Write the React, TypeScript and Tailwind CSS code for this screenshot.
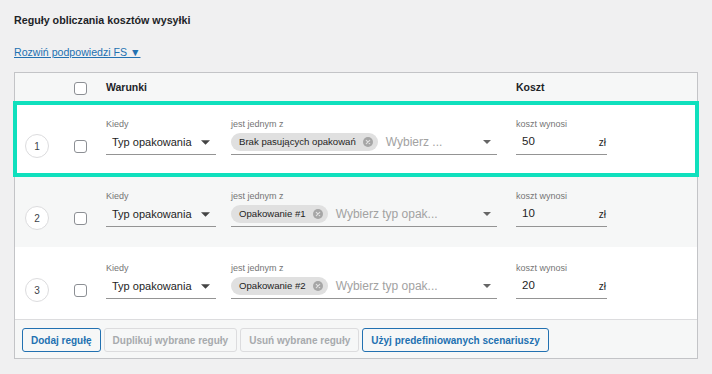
import React from 'react';

interface Rule {
  n: number;
  chip: string;
  placeholder: string;
  cost: string;
}

const rules: Rule[] = [
  { n: 1, chip: 'Brak pasujących opakowań', placeholder: 'Wybierz ...', cost: '50' },
  { n: 2, chip: 'Opakowanie #1', placeholder: 'Wybierz typ opak...', cost: '10' },
  { n: 3, chip: 'Opakowanie #2', placeholder: 'Wybierz typ opak...', cost: '20' },
];

const Caret = ({ className = '' }: { className?: string }) => (
  <svg viewBox="0 0 10 5" className={className}>
    <path d="M0 0 L5 5 L10 0 Z" fill="currentColor" />
  </svg>
);

const Checkbox = () => (
  <div className="w-[13px] h-[13px] rounded-[3px] border border-[#8c8f94] bg-white" />
);

const Chip = ({ label }: { label: string }) => (
  <div className="flex items-center h-[18px] rounded-full bg-[#e0e0e0] pl-[8px] pr-[5px] gap-[7px] shrink-0">
    <span className="text-[9.6px] text-[#1e1e1e] whitespace-nowrap">{label}</span>
    <svg viewBox="0 0 10 10" className="w-[10px] h-[10px]">
      <circle cx="5" cy="5" r="5" fill="#a6a6a6" />
      <path d="M3.3 3.3 L6.7 6.7 M6.7 3.3 L3.3 6.7" stroke="#e0e0e0" strokeWidth="1.2" strokeLinecap="round" />
    </svg>
  </div>
);

const RuleRow = ({ rule, striped, active }: { rule: Rule; striped: boolean; active: boolean }) => (
  <div
    className={`flex h-[72px] ${striped ? 'bg-[#f6f7f7]' : 'bg-white'} ${
      active ? 'relative z-10 outline-4 outline-[#0fe0bd] -outline-offset-2' : ''
    }`}
  >
    {/* Number */}
    <div className="w-[59px] pl-[10px] pt-[31px]">
      <div className="w-[24px] h-[24px] rounded-full border border-[#dcdcde] bg-white flex items-center justify-center text-[10px] text-[#3c434a]">
        {rule.n}
      </div>
    </div>

    {/* Checkbox */}
    <div className="w-[32px] pt-[37px]">
      <Checkbox />
    </div>

    {/* Conditions */}
    <div className="w-[410px] flex gap-[15px] pt-[15px]">
      <div className="w-[110px]">
        <div className="h-[12px] leading-[12px] text-[9px] text-[#757575]">Kiedy</div>
        <div className="h-[25px] border-b border-[#949494] flex items-center justify-between pl-[6px] pr-[6px]">
          <span className="text-[11px] text-[#1e1e1e]">Typ opakowania</span>
          <Caret className="w-[9px] h-[5px] text-[#444]" />
        </div>
      </div>
      <div className="w-[266px]">
        <div className="h-[12px] leading-[12px] text-[9px] text-[#757575]">jest jednym z</div>
        <div className="h-[25px] border-b border-[#949494] flex items-center pr-[6px]">
          <Chip label={rule.chip} />
          <span className="ml-[8px] text-[12px] text-[#a2a2a2] whitespace-nowrap">{rule.placeholder}</span>
          <Caret className="ml-auto w-[8px] h-[4px] text-[#666]" />
        </div>
      </div>
    </div>

    {/* Cost */}
    <div className="w-[91px] pt-[15px]">
      <div className="h-[12px] leading-[12px] text-[9px] text-[#757575]">koszt wynosi</div>
      <div className="h-[25px] border-b border-[#949494] flex items-center justify-between pl-[6px] pr-[1px]">
        <span className="text-[11.5px] text-[#1e1e1e]">{rule.cost}</span>
        <span className="text-[10px] text-[#1e1e1e]">zł</span>
      </div>
    </div>
  </div>
);

export default function App() {
  return (
    <div className="w-[712px] h-[374px] bg-[#f0f0f1] px-[14px] font-['Liberation_Sans',Arial,sans-serif] text-[#1d2327]">
      <div className="pt-[13px] leading-[14px] text-[10.7px] font-bold">Reguły obliczania kosztów wysyłki</div>

      <div className="mt-[18px] leading-[14px] text-[10.6px]">
        <a className="text-[#2271b1] underline">Rozwiń podpowiedzi FS ▼</a>
      </div>

      {/* Rules table */}
      <div className="mt-[13px] border border-[#c3c4c7] bg-white">
        {/* Header */}
        <div className="flex h-[30px] items-center bg-[#f6f7f7] text-[10.5px] font-bold">
          <div className="w-[59px]" />
          <div className="w-[32px]">
            <Checkbox />
          </div>
          <div className="w-[410px]">Warunki</div>
          <div>Koszt</div>
        </div>

        {rules.map((rule, i) => (
          <RuleRow key={rule.n} rule={rule} striped={i % 2 === 1} active={i === 0} />
        ))}

        {/* Footer */}
        <div className="flex gap-[3px] border-t border-[#dcdcde] bg-[#f6f7f7] px-[7px] pt-[8px] pb-[6px] text-[10px] font-bold">
          <button className="h-[24px] px-[8px] rounded-[3px] border border-[#2271b1] text-[#2271b1] bg-[#f6f7f7]">
            Dodaj regułę
          </button>
          <button className="h-[24px] px-[8px] rounded-[3px] border border-[#dcdcde] text-[#a7aaad] bg-[#f6f7f7]">
            Duplikuj wybrane reguły
          </button>
          <button className="h-[24px] px-[8px] rounded-[3px] border border-[#dcdcde] text-[#a7aaad] bg-[#f6f7f7]">
            Usuń wybrane reguły
          </button>
          <button className="h-[24px] px-[8px] rounded-[3px] border border-[#2271b1] text-[#2271b1] bg-[#f6f7f7]">
            Użyj predefiniowanych scenariuszy
          </button>
        </div>
      </div>
    </div>
  );
}
